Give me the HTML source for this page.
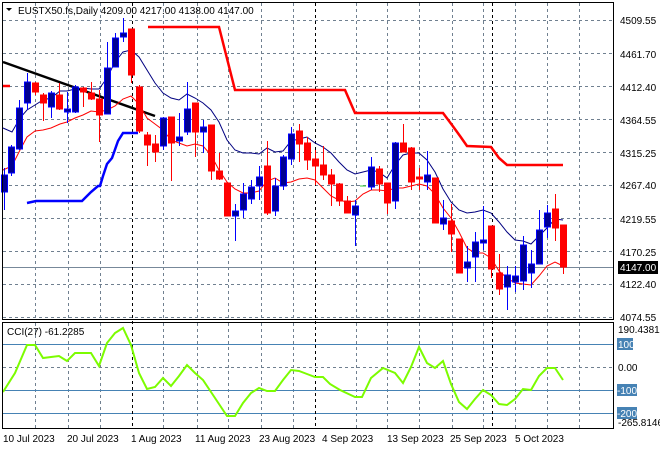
<!DOCTYPE html>
<html><head><meta charset="utf-8">
<style>
html,body{margin:0;padding:0;background:#fff;}
body{width:660px;height:450px;overflow:hidden;}
svg{display:block;font-family:"Liberation Sans",Tahoma,sans-serif;font-size:10px;}
</style></head>
<body>
<svg id="s" width="660" height="450" viewBox="0 0 660 450" xmlns="http://www.w3.org/2000/svg">
<rect width="660" height="450" fill="#fff"/>
<g id="grid" stroke="#708090" stroke-width="1" stroke-dasharray="3,3" fill="none"></g>
<!-- 4147 line -->
<line x1="3" y1="267.5" x2="614" y2="267.5" stroke="#778899" stroke-width="1"/>
<!-- CCI levels -->
<g stroke="#4682b4" stroke-width="1">
<line x1="3" y1="344.5" x2="614" y2="344.5"/>
<line x1="3" y1="390.5" x2="614" y2="390.5"/>
<line x1="3" y1="413.5" x2="614" y2="413.5"/>
</g>
<line x1="3" y1="367.5" x2="614" y2="367.5" stroke="#708090" stroke-dasharray="3,3"/>
<!-- period separators -->
<g stroke="#000" stroke-width="1" stroke-dasharray="3,3">
<line x1="132.5" y1="3" x2="132.5" y2="428"/>
<line x1="315.5" y1="3" x2="315.5" y2="428"/>
<line x1="492.5" y1="3" x2="492.5" y2="428"/>
</g>
<!-- black trend line -->
<line x1="3" y1="62" x2="155" y2="116" stroke="#000" stroke-width="2.5"/>
<!-- thick red step line -->
<polyline fill="none" stroke="#ff0000" stroke-width="2.5" points="3,86 10,86"/>
<polyline fill="none" stroke="#ff0000" stroke-width="2.5" points="148,27 219,27 235,90 345,90 355,113 443,113 452,125 460,136 467,146 491,147 499,158 507,165 563,165"/>
<!-- thick blue step line -->
<polyline fill="none" stroke="#0000ff" stroke-width="2.5" points="27,203 36,201 82,201 86,197 91,192 98,186 100,186 103,176 107,164 112,158 118,141 123,133 138,133"/>
<!-- thin MAs -->
<polyline id="mab" fill="none" stroke="#000080" stroke-width="1" points="3,128 12,132 20,118 27,110 35,105 43,100 51,98 60,91 67,91 75,89 83,88 91,89 99,89 107,78 115,62 123,52 131,50 139,57 147,70 155,83 163,93 171,98 179,100 187,94 195,98 203,103 211,110 219,122 227,140 235,150 243,153 251,153 259,154 267,148 275,152 283,151 291,141 299,139 307,137 315,143 323,147 331,153 339,162 347,170 355,174 363,172 371,170 379,172 387,178 395,165 403,155 411,153 419,153 427,160 435,172 443,189 451,202 459,210 467,213 475,212 483,210 491,213 499,222 507,232 515,240 523,241 531,244 539,236 547,228 555,219 563,220"/>
<polyline fill="none" stroke="#ff0000" stroke-width="1" points="3,170 12,166 20,150 27,137 35,131 43,130 51,128 60,124 67,122 75,118 83,115 91,111 99,112 107,110 115,106 123,99 131,96 139,104 147,118 155,124 163,130 171,140 179,143 187,146 195,144 203,146 211,155 219,170 227,182 235,189 243,193 251,193 259,191 267,181 275,178 283,183 291,182 299,179 307,178 315,180 323,188 331,196 339,200 347,202 355,201 363,194 371,190 379,190 387,191 395,188 403,188 411,186 419,184 427,186 435,194 443,208 451,218 459,232 467,248 475,253 483,253 491,258 499,271 507,278 515,283 523,284 531,285 539,276 547,266 555,262 563,266"/>
<line x1="360" y1="186" x2="366" y2="186" stroke="#33cc33" stroke-width="1"/>
<g id="candles"></g>
<!-- CCI line -->
<polyline fill="none" stroke="#7cfc00" stroke-width="2" points="3,392 15,373 27,345 35,345 43,358 51,357 59,356 67,361 75,353 91,353 99,366 107,343 115,333 123,328 131,345 139,373 147,389 155,387 163,378 171,386 179,376 187,365 195,373 203,380 211,392 219,404 227,416 235,416 243,403 251,393 259,388 267,391 275,391 283,380 291,370 299,371 307,374 315,377 323,377 330,384 340,390 355,397 362,397 371,378 383,368 395,373 403,383 411,367 419,347 427,363 435,368 443,361 451,384 459,402 467,409 475,399 483,390 491,395 499,404 507,405 515,399 523,389 531,390 539,376 547,368 555,368 563,380"/>
<!-- frames -->
<g stroke="#000" stroke-width="1" fill="none">
<rect x="2.5" y="2.5" width="611" height="317"/>
<rect x="2.5" y="322.5" width="611" height="106"/>
</g>
<!-- title -->
<path d="M6 8 L12 8 L9 11 Z" fill="#000"/>
<text x="18" y="14" fill="#000">EUSTX50.fs,Daily  4209.00 4217.00 4138.00 4147.00</text>
<text x="7" y="335" fill="#000">CCI(27) -61.2285</text>
<!-- price axis labels -->
<g fill="#000">
<text x="620" y="24">4509.55</text>
<text x="620" y="58">4461.70</text>
<text x="620" y="91">4412.40</text>
<text x="620" y="124">4364.55</text>
<text x="620" y="157">4315.25</text>
<text x="620" y="189">4267.40</text>
<text x="620" y="223">4219.55</text>
<text x="620" y="256">4170.25</text>
<text x="620" y="288">4122.40</text>
<text x="620" y="321">4074.55</text>
</g>
<rect x="618" y="261" width="40" height="13" fill="#000"/>
<text x="620" y="271" fill="#fff">4147.00</text>
<text x="618" y="333" fill="#000">190.4381</text>
<rect x="617" y="338" width="16" height="12" fill="#4682b4"/>
<text x="618" y="348" fill="#fff">100</text>
<text x="618" y="371" fill="#000">0.00</text>
<rect x="617" y="384" width="20" height="12" fill="#4682b4"/>
<text x="617" y="394" fill="#fff">-100</text>
<rect x="617" y="407" width="20" height="12" fill="#4682b4"/>
<text x="617" y="417" fill="#fff">-200</text>
<text x="618" y="426" fill="#000">-265.8146</text>
<!-- date labels -->
<g fill="#000">
<text x="3" y="442">10 Jul 2023</text>
<text x="67" y="442">20 Jul 2023</text>
<text x="131" y="442">1 Aug 2023</text>
<text x="195" y="442">11 Aug 2023</text>
<text x="259" y="442">23 Aug 2023</text>
<text x="322" y="442">4 Sep 2023</text>
<text x="387" y="442">13 Sep 2023</text>
<text x="450" y="442">25 Sep 2023</text>
<text x="515" y="442">5 Oct 2023</text>
</g>
</svg>
<script>
(function(){
var NS="http://www.w3.org/2000/svg";
var g=document.getElementById('grid');
function ln(p,x1,y1,x2,y2){var l=document.createElementNS(NS,'line');l.setAttribute('x1',x1);l.setAttribute('y1',y1);l.setAttribute('x2',x2);l.setAttribute('y2',y2);p.appendChild(l);return l;}
var vx=[35,68,100,163,197,228,261,293,356,387,419,452,483,515,547,579];
vx.forEach(function(x){ln(g,x+.5,3,x+.5,319);ln(g,x+.5,323,x+.5,428);});
[20.5,53.5,86.5,119.5,152.5,185.5,218.5,251.5,284.5,317.5].forEach(function(y){ln(g,3,y,614,y);});
var c=[
[4,'b',175,192,168,210],[11,'b',147,173,145,176],[19,'b',108,149,100,150],[27,'b',82,103,73,110],
[35,'r',83,92,82,95],[43,'r',95,103,93,121],[51,'b',93,107,91,118],[59,'r',95,109,83,110],
[67,'b',109,112,92,123],[75,'b',87,112,85,113],[83,'r',88,92,87,107],[91,'r',93,99,82,100],
[99,'r',99,115,90,142],[107,'b',68,114,42,114],[115,'b',38,67,33,67],[123,'b',33,37,18,42],
[131,'r',29,75,29,83],[139,'r',87,131,85,133],[147,'r',135,145,132,166],[155,'r',144,152,135,162],
[163,'b',118,146,117,150],[171,'r',117,143,117,181],[179,'b',137,141,113,146],[187,'b',109,132,82,135],
[195,'r',103,132,103,157],[203,'b',127,132,120,153],[211,'r',125,171,125,180],[219,'r',171,179,153,180],
[227,'r',183,216,183,216],[235,'b',211,216,204,241],[243,'b',194,210,183,218],[251,'b',187,199,180,204],
[259,'b',177,186,166,200],[267,'r',166,213,141,215],[275,'b',186,211,178,216],[283,'b',157,186,155,190],
[291,'b',134,159,127,165],[299,'r',131,144,124,162],[307,'r',143,160,137,170],[315,'r',159,166,150,185],
[323,'r',165,175,146,180],[331,'r',175,184,169,206],[339,'r',184,201,183,206],[347,'r',201,213,196,213],
[355,'b',206,215,200,246],[371,'b',167,187,157,190],[379,'r',169,184,166,192],[387,'r',183,203,183,214],
[395,'b',143,201,142,209],[403,'r',143,152,124,152],[411,'r',148,182,147,190],[419,'r',177,179,168,190],
[427,'b',175,182,151,190],[435,'r',178,223,178,223],[443,'b',218,224,200,230],[451,'r',221,234,204,252],
[459,'r',239,273,239,273],[467,'b',262,268,246,282],[475,'b',242,257,232,282],[483,'b',240,243,206,250],
[491,'r',226,269,226,278],[499,'r',273,289,254,295],[507,'b',275,287,266,310],[515,'b',276,282,266,292],
[523,'b',245,281,236,290],[531,'b',264,273,250,288],[539,'b',230,264,210,264],[547,'b',213,227,205,238],
[555,'r',209,228,194,241],[563,'r',225,267,225,274]
];
var cg=document.getElementById('candles');
c.forEach(function(d){
 var col=d[1]=='b'?'#0000ff':'#ff0000', fill=d[1]=='b'?'#000090':'#ff0000';
 var w=ln(cg,d[0]+.5,d[4],d[0]+.5,d[5]);w.setAttribute('stroke',col);w.setAttribute('stroke-width','1');
 var r=document.createElementNS(NS,'rect');
 r.setAttribute('x',d[0]-2.5);r.setAttribute('y',d[2]);r.setAttribute('width',6);r.setAttribute('height',Math.max(2,d[3]-d[2]));
 r.setAttribute('fill',fill);r.setAttribute('stroke',col);r.setAttribute('stroke-width','1');
 cg.appendChild(r);
});
})();
</script>
</body></html>
